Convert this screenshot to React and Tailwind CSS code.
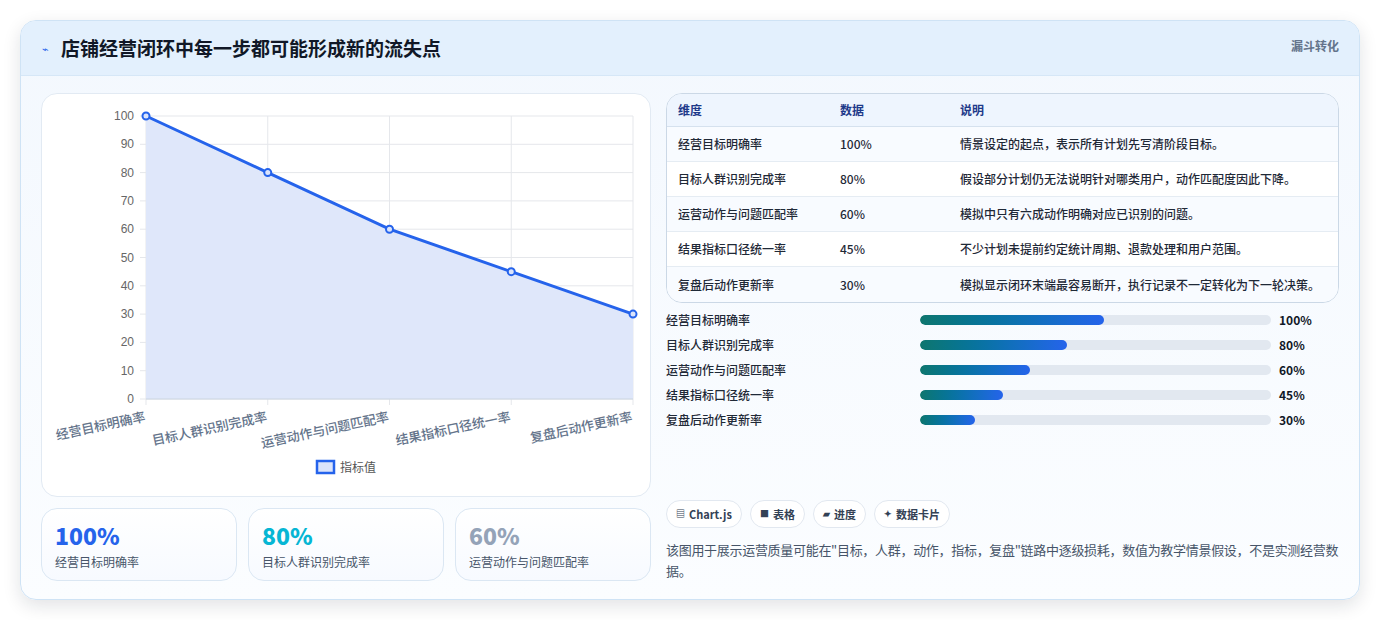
import React from 'react';

const FONT = { fontFamily: '"Noto Sans CJK SC", "Noto Sans", sans-serif' };

const rows = [
  { name: '经营目标明确率', value: 100, note: '情景设定的起点，表示所有计划先写清阶段目标。' },
  { name: '目标人群识别完成率', value: 80, note: '假设部分计划仍无法说明针对哪类用户，动作匹配度因此下降。' },
  { name: '运营动作与问题匹配率', value: 60, note: '模拟中只有六成动作明确对应已识别的问题。' },
  { name: '结果指标口径统一率', value: 45, note: '不少计划未提前约定统计周期、退款处理和用户范围。' },
  { name: '复盘后动作更新率', value: 30, note: '模拟显示闭环末端最容易断开，执行记录不一定转化为下一轮决策。' },
];

function Chart() {
  const x0 = 104, x1 = 591, y0 = 22, y1 = 305;
  const xs = rows.map((_, i) => x0 + ((x1 - x0) * i) / 4);
  const yOf = (v) => y1 - ((y1 - y0) * v) / 100;
  const pts = rows.map((r, i) => `${xs[i]},${yOf(r.value)}`).join(' ');
  const ticks = [0, 10, 20, 30, 40, 50, 60, 70, 80, 90, 100];
  return (
    <svg width="610" height="403" className="block">
      {ticks.map((t) => (
        <g key={t}>
          <line x1={x0 - 6} x2={x1} y1={yOf(t)} y2={yOf(t)} stroke="#e5e7eb" />
          <text x={x0 - 12} y={yOf(t) + 4} textAnchor="end" fontSize="12" fill="#666" fontFamily="Liberation Sans, Arial, sans-serif">{t}</text>
        </g>
      ))}
      {xs.map((x, i) => (
        <line key={i} x1={x} x2={x} y1={y0} y2={y1 + 6} stroke="#e5e7eb" />
      ))}
      <polygon points={`${x0},${y1} ${pts} ${x1},${y1}`} fill="#dfe7fa" />
      <line x1={x0} x2={x1} y1={y1} y2={y1} stroke="#cbd5e1" />
      <polyline points={pts} fill="none" stroke="#2563eb" strokeWidth="3" />
      {rows.map((r, i) => (
        <circle key={i} cx={xs[i]} cy={yOf(r.value)} r="3.5" fill="#dbe4fb" stroke="#2563eb" strokeWidth="2" />
      ))}
      {rows.map((r, i) => (
        <text key={i} x={xs[i]} y={y1 + 22} textAnchor="end" fontSize="13" fontWeight="500" fill="#64748b" transform={`rotate(-12 ${xs[i]} ${y1 + 22})`} style={FONT}>{r.name}</text>
      ))}
      <rect x="275" y="367" width="17" height="12" fill="#dbe4fb" stroke="#2563eb" strokeWidth="2.5" />
      <text x="298" y="378" fontSize="12" fill="#555" style={FONT}>指标值</text>
    </svg>
  );
}

export default function App() {
  return (
    <div className="min-h-[620px] bg-white pt-5 px-5" style={FONT}>
      <div className="w-[1340px] rounded-2xl border border-[#cfe3f5] bg-gradient-to-b from-[#f3f8fe] to-[#fbfdff] shadow-[0_6px_18px_rgba(15,23,42,0.12)] overflow-hidden">
        <div className="h-[55px] flex items-center justify-between pl-[21px] pr-5 bg-[#e3f0fd] border-b border-[#d6e7f7]">
          <div className="flex items-center gap-3">
            <span className="text-[11px] text-[#2563eb]">⌁</span>
            <h1 className="text-[19px] font-bold text-[#111827]">店铺经营闭环中每一步都可能形成新的流失点</h1>
          </div>
          <span className="text-[12px] font-bold text-[#64748b] self-start mt-4">漏斗转化</span>
        </div>
        <div className="flex gap-[15px] px-5 pt-[17px] pb-[18px]">
          <div className="w-[610px] flex flex-col gap-[11px]">
            <div className="h-[404px] rounded-2xl border border-[#e2eaf3] bg-white">
              <Chart />
            </div>
            <div className="grid grid-cols-3 gap-[11px]">
              {[
                ['100%', 'text-[#2563eb]', rows[0].name],
                ['80%', 'text-[#06b6d4]', rows[1].name],
                ['60%', 'text-[#94a3b8]', rows[2].name],
              ].map(([v, c, n]) => (
                <div key={n} className="h-[73px] rounded-2xl border border-[#dbe7f3] bg-gradient-to-b from-white to-[#f7faff] px-[13px] pt-[12px]">
                  <div className={`text-[23px] font-black leading-[28px] ${c}`}>{v}</div>
                  <div className="text-[12px] text-[#475569] mt-1">{n}</div>
                </div>
              ))}
            </div>
          </div>
          <div className="flex-1 flex flex-col">
            <div className="rounded-2xl border border-[#cbd8e6] bg-white overflow-hidden">
              <div className="grid grid-cols-[162px_120px_1fr] h-[33px] items-center px-[11px] bg-[#eef5fe] border-b border-[#d5e1ee] text-[12px] font-semibold text-[#1e3a8a]">
                <div>维度</div><div>数据</div><div>说明</div>
              </div>
              {rows.map((r, i) => (
                <div key={r.name} className={`grid grid-cols-[162px_120px_1fr] h-[35px] items-center px-[11px] text-[12px] font-medium text-[#1f2937] ${i < 4 ? 'border-b border-[#e5ecf3]' : ''} ${i % 2 === 0 ? 'bg-[#f8fbff]' : 'bg-white'}`}>
                  <div>{r.name}</div><div>{r.value}%</div><div>{r.note}</div>
                </div>
              ))}
            </div>
            <div className="mt-[8px] flex flex-col gap-[7px]">
              {rows.map((r) => (
                <div key={r.name} className="flex items-center h-[18px] text-[12px] font-medium text-[#1f2937]">
                  <div className="w-[254px]">{r.name}</div>
                  <div className="w-[351px] h-[10px] rounded-full bg-[#e2e8f0] overflow-hidden">
                    <div className="h-full rounded-full bg-gradient-to-r from-[#0f766e] to-[#2563eb]" style={{ width: `${r.value * 0.524}%` }} />
                  </div>
                  <div className="ml-2 font-bold text-[#111827]">{r.value}%</div>
                </div>
              ))}
            </div>
            <div className="mt-auto flex gap-[8px]">
              {[['▤', 'Chart.js'], ['■', '表格'], ['▰', '进度'], ['✦', '数据卡片']].map(([ic, t]) => (
                <span key={t} className="h-[28px] px-[9px] flex items-center gap-1 rounded-full border border-[#e2e8f0] bg-white text-[11px] font-semibold text-[#334155]">
                  <span className="text-[9px] text-[#334155]">{ic}</span>{t}
                </span>
              ))}
            </div>
            <p className="mt-[11px] text-[13px] leading-[21px] tracking-[-0.3px] text-[#475569]">
              该图用于展示运营质量可能在"目标，人群，动作，指标，复盘"链路中逐级损耗，数值为教学情景假设，不是实测经营数据。
            </p>
          </div>
        </div>
      </div>
    </div>
  );
}
